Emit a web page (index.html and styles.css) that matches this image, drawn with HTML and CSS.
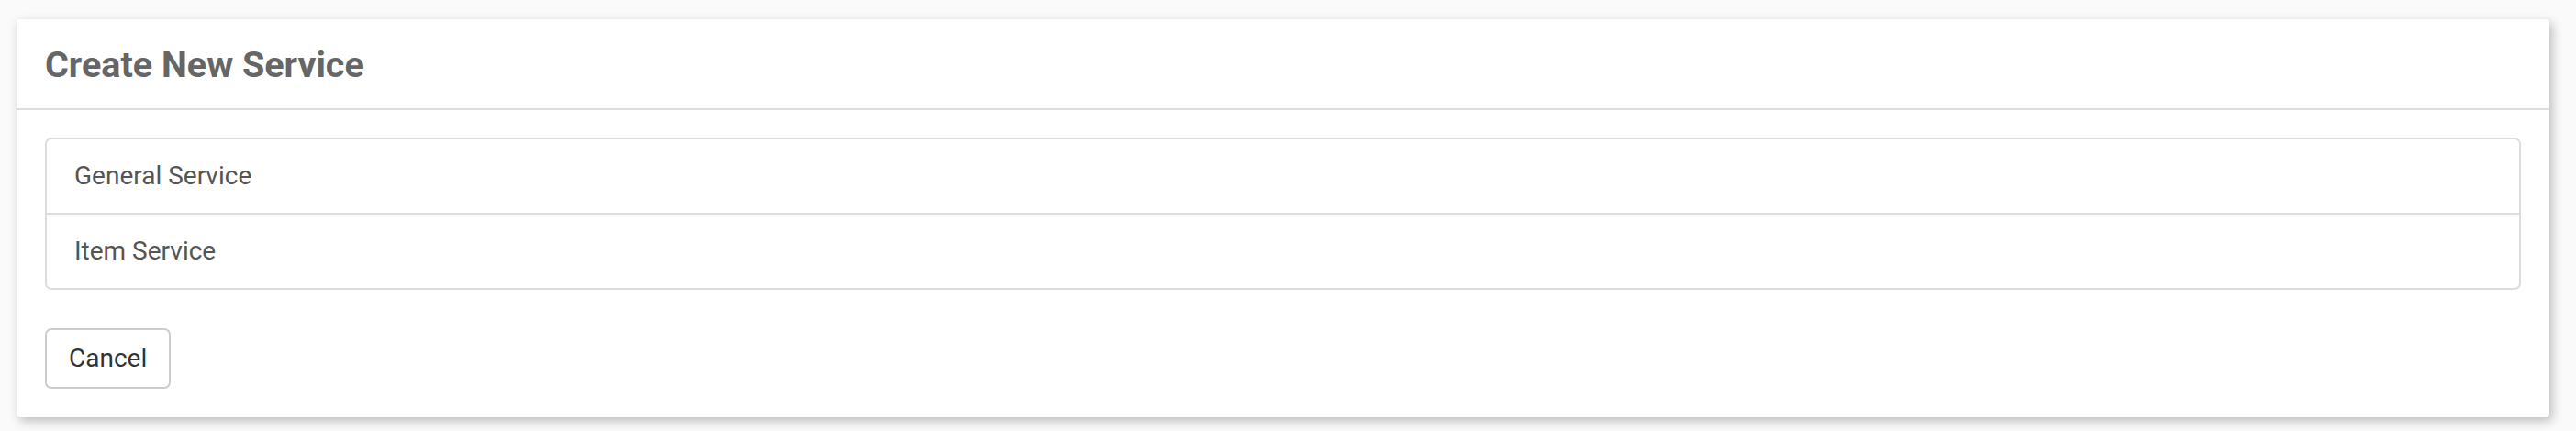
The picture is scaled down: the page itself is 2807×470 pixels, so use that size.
FILE: index.html
```html
<!DOCTYPE html>
<html>
<head>
<meta charset="utf-8">
<link rel="stylesheet" href="styles.css">
</head>
<body>
<div class="modal">
  <div class="modal-header">
    <h4 class="modal-title">Create New Service</h4>
  </div>
  <div class="modal-body">
    <div class="list-group">
      <div class="list-item">General Service</div>
      <div class="list-item">Item Service</div>
    </div>
    <button class="btn">Cancel</button>
  </div>
</div>
</body>
</html>
```
FILE: styles.css
```css
html, body {
  margin: 0;
  padding: 0;
  background: #fafafa;
}
body {
  padding: 21px 29px 16px 18px;
  font-family: Roboto, "Liberation Sans", sans-serif;
}
.modal {
  width: 2760px;
  background: #fff;
  border-radius: 4px;
  box-shadow: 3px 4px 12px rgba(0, 0, 0, 0.25);
}
.modal-header {
  height: 95px;
  display: flex;
  align-items: center;
  padding: 2px 31px 0;
  border-bottom: 2px solid #dddddd;
}
.modal-title {
  margin: 0;
  font-size: 39.5px;
  font-weight: 700;
  color: #666666;
  line-height: 1;
}
.modal-body {
  padding: 30px 31px 31px;
  display: flex;
  flex-direction: column;
  align-items: flex-start;
  gap: 42px;
}
.list-group {
  align-self: stretch;
  border: 2px solid #dddddd;
  border-radius: 7px;
}
.list-item {
  padding: 20px 30px;
  font-size: 28px;
  line-height: 40px;
  color: #555555;
}
.list-item + .list-item {
  border-top: 2px solid #dddddd;
}
.btn {
  font-family: Roboto, "Liberation Sans", sans-serif;
  font-size: 28px;
  line-height: 40px;
  padding: 11px 24px;
  color: #333333;
  background: #fff;
  border: 2px solid #cccccc;
  border-radius: 7px;
}
```
